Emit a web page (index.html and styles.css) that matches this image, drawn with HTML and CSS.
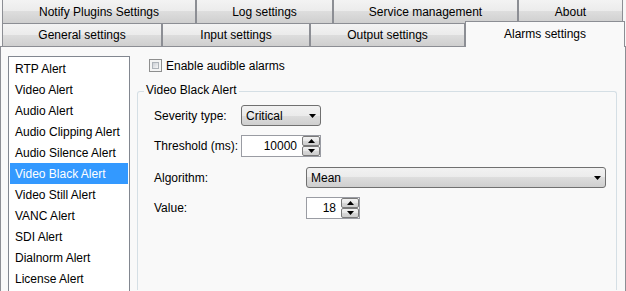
FILE: index.html
```html
<!DOCTYPE html>
<html>
<head>
<meta charset="utf-8">
<title>Alarms settings</title>
<link rel="stylesheet" href="styles.css">
</head>
<body>
<div class="tabs">
  <div class="tab-row row1">
    <div class="tab w194">Notify Plugins Settings</div>
    <div class="tab w137">Log settings</div>
    <div class="tab w185">Service management</div>
    <div class="tab w105">About</div>
  </div>
  <div class="tab-row row2">
    <div class="tab w160">General settings</div>
    <div class="tab w148">Input settings</div>
    <div class="tab w155">Output settings</div>
    <div class="tab active w160">Alarms settings</div>
  </div>
</div>
<div class="pane">
  <div class="list">
    <div class="item">RTP Alert</div>
    <div class="item">Video Alert</div>
    <div class="item">Audio Alert</div>
    <div class="item">Audio Clipping Alert</div>
    <div class="item">Audio Silence Alert</div>
    <div class="item sel">Video Black Alert</div>
    <div class="item">Video Still Alert</div>
    <div class="item">VANC Alert</div>
    <div class="item">SDI Alert</div>
    <div class="item">Dialnorm Alert</div>
    <div class="item">License Alert</div>
  </div>
  <div class="main">
    <div class="check"><span class="box"><span class="box-in"></span></span><span class="check-label">Enable audible alarms</span></div>
    <fieldset class="group">
      <legend>Video Black Alert</legend>
      <div class="rows">
        <div class="row">
          <span class="lbl">Severity type:</span>
          <div class="combo w80"><span>Critical</span><svg width="7" height="4" viewBox="0 0 7 4"><path d="M0 0h7L3.5 4z" fill="#000"/></svg></div>
        </div>
        <div class="row gapfix">
          <span class="lbl">Threshold (ms):</span>
          <div class="spin w80"><span class="val">10000</span><span class="btns"><span class="sb"><svg width="7" height="4" viewBox="0 0 7 4"><path d="M0 4h7L3.5 0z" fill="#000"/></svg></span><span class="sb"><svg width="7" height="4" viewBox="0 0 7 4"><path d="M0 0h7L3.5 4z" fill="#000"/></svg></span></span></div>
        </div>
        <div class="row">
          <span class="lbl wide">Algorithm:</span>
          <div class="combo w300"><span>Mean</span><svg width="7" height="4" viewBox="0 0 7 4"><path d="M0 0h7L3.5 4z" fill="#000"/></svg></div>
        </div>
        <div class="row">
          <span class="lbl wide">Value:</span>
          <div class="spin w54"><span class="val">18</span><span class="btns"><span class="sb"><svg width="7" height="4" viewBox="0 0 7 4"><path d="M0 4h7L3.5 0z" fill="#000"/></svg></span><span class="sb"><svg width="7" height="4" viewBox="0 0 7 4"><path d="M0 0h7L3.5 4z" fill="#000"/></svg></span></span></div>
        </div>
      </div>
    </fieldset>
  </div>
</div>
</body>
</html>
```
FILE: styles.css
```css
html, body {
  margin: 0;
  padding: 0;
}
body {
  width: 626px;
  height: 291px;
  overflow: hidden;
  background: #f7f7f7;
  font-family: "Liberation Sans", Arial, sans-serif;
  font-size: 12px;
  color: #000;
}
.tab-row {
  display: flex;
  padding-left: 2px;
  margin-top: -1px;
}
.row1 { height: 25px; }
.row2 { height: 24px; align-items: flex-end; }
.tab {
  box-sizing: border-box;
  flex: none;
  height: 100%;
  border: 1px solid #8c8e94;
  background: linear-gradient(#f3f3f3, #ebebeb 50%, #dddddd 50%, #cfcfcf);
  display: flex;
  align-items: center;
  justify-content: center;
  white-space: nowrap;
}
.tab.active {
  height: 26px;
  border-bottom: none;
  background: #f9f9f9;
  padding-bottom: 1px;
  position: relative;
  z-index: 1;
}
.w194 { width: 194px; }
.w137 { width: 137px; }
.w185 { width: 185px; }
.w105 { width: 105px; }
.w160 { width: 160px; }
.w148 { width: 148px; }
.w155 { width: 155px; }

.pane {
  margin-top: -1px;
  box-sizing: border-box;
  width: 626px;
  height: 245px;
  border: 1px solid #8c8e94;
  border-bottom: none;
  background: #f9f9f9;
  display: flex;
  align-items: flex-start;
  padding: 9px 0 0 7px;
}
.list {
  flex: none;
  box-sizing: border-box;
  width: 122px;
  height: 235px;
  border: 1px solid #828790;
  border-bottom: none;
  background: #fff;
  padding: 1px;
  margin-right: 7px;
  overflow: hidden;
}
.item {
  box-sizing: border-box;
  height: 21px;
  line-height: 21px;
  padding: 1px 0 0 5px;
  white-space: nowrap;
}
.item.sel {
  background: #3399ff;
  color: #fff;
}
.main {
  flex: 1;
  display: flex;
  flex-direction: column;
  min-width: 0;
}
.check {
  display: flex;
  align-items: center;
  height: 19px;
  padding-left: 12px;
}
.box {
  box-sizing: border-box;
  width: 13px;
  height: 13px;
  border: 1px solid #8e8f8f;
  background: #f4f4f4;
  padding: 2px;
  display: flex;
}
.box-in {
  flex: 1;
  border: 1px solid #aeb3b9;
  background: linear-gradient(135deg, #cbcfd5, #f6f6f6);
}
.check-label {
  margin-left: 4px;
}
.group {
  box-sizing: border-box;
  margin: 8px 8px 0 0;
  padding: 5px 0 0 6px;
  border: 1px solid #d5dfe5;
  border-bottom: none;
  border-radius: 3px 3px 0 0;
  height: 207px;
  min-width: 0;
  overflow: hidden;
}
.group legend {
  padding: 0 2px 3px;
  line-height: 14px;
}
.rows {
  display: flex;
  flex-direction: column;
  gap: 9px;
  padding-left: 10px;
}
.row {
  display: flex;
  align-items: center;
}
.gapfix { margin-bottom: 1px; }
.lbl {
  flex: none;
  width: 87px;
  white-space: nowrap;
}
.lbl.wide { width: 152px; }
.combo {
  box-sizing: border-box;
  flex: none;
  height: 21px;
  border: 1px solid #707070;
  border-radius: 3px;
  background: linear-gradient(#f2f2f2, #ebebeb 50%, #dddddd 50%, #cfcfcf);
  display: flex;
  align-items: center;
  justify-content: space-between;
  padding: 0 4px 0 4px;
}
.w80 { width: 80px; }
.w300 { width: 300px; }
.w54 { width: 54px; }
.spin {
  box-sizing: border-box;
  flex: none;
  height: 22px;
  border: 1px solid #9a9ca3;
  background: #fff;
  display: flex;
}
.spin .val {
  flex: 1;
  text-align: right;
  padding-right: 5px;
  line-height: 20px;
}
.btns {
  flex: none;
  width: 18px;
  display: flex;
  flex-direction: column;
}
.sb {
  flex: 1;
  box-sizing: border-box;
  border: 1px solid #7a7a7a;
  border-radius: 2px;
  background: linear-gradient(#f2f2f2, #e6e6e6 50%, #d8d8d8 50%, #cdcdcd);
  display: flex;
  align-items: center;
  justify-content: center;
}
```
